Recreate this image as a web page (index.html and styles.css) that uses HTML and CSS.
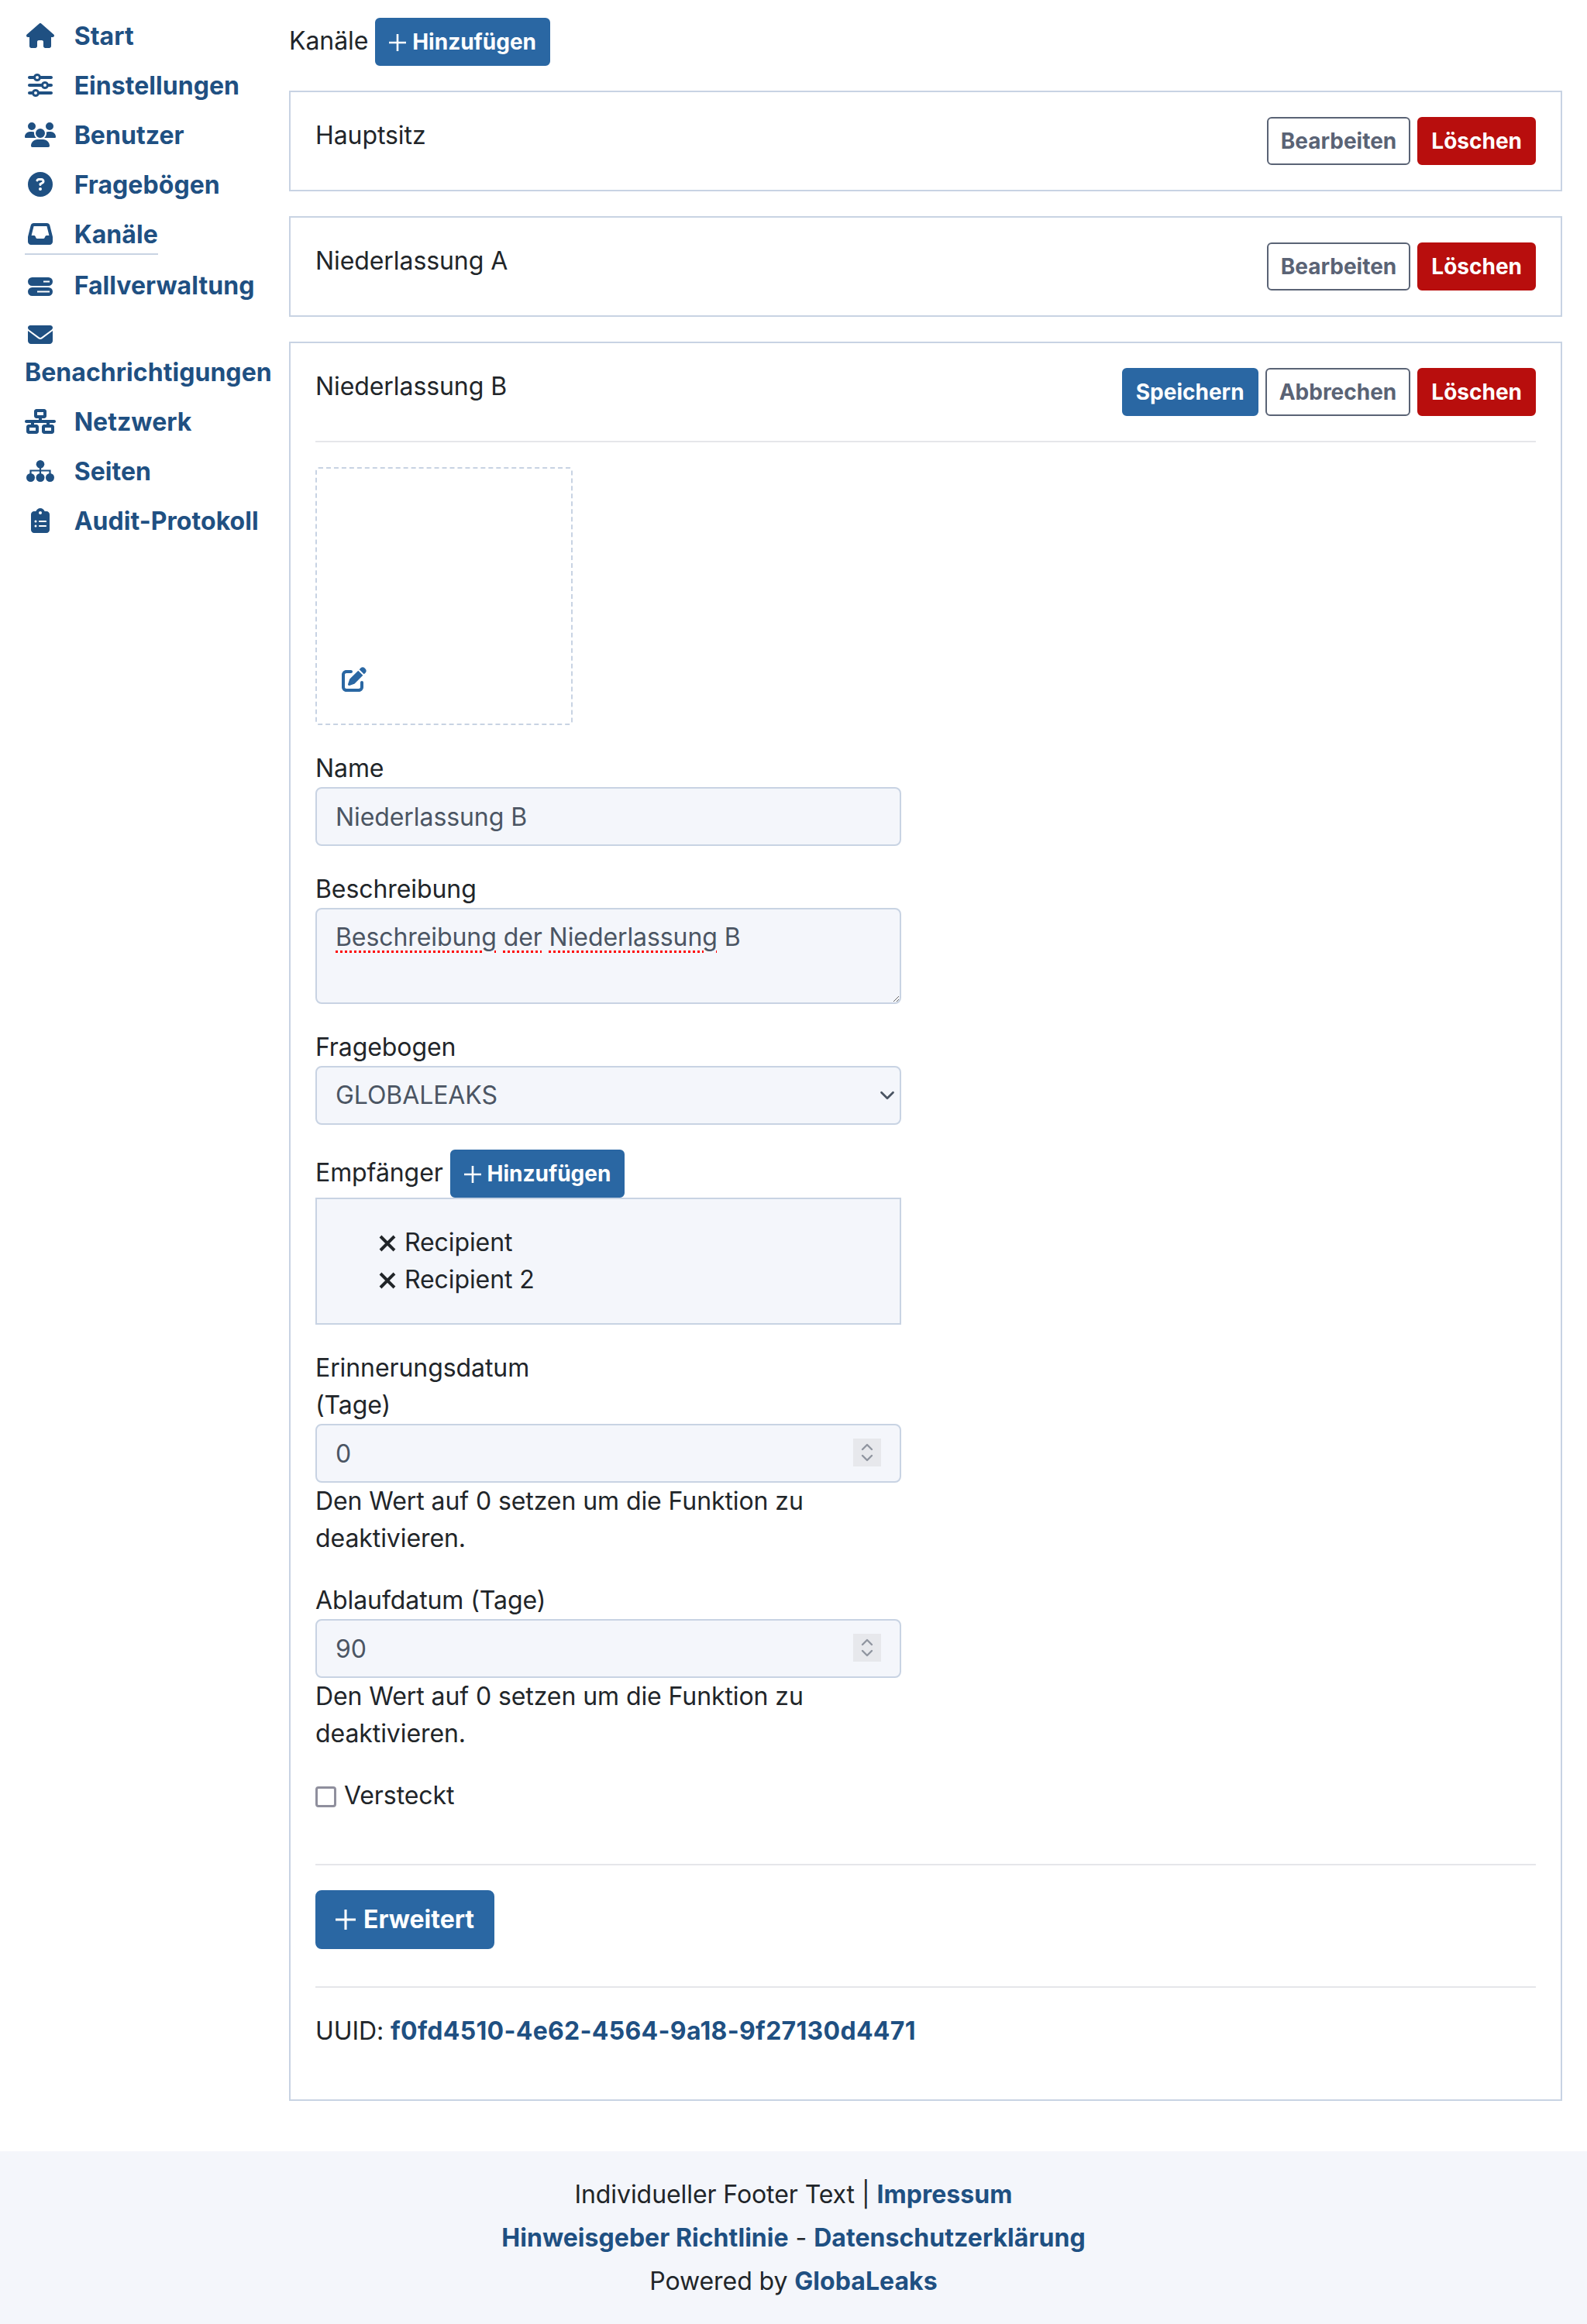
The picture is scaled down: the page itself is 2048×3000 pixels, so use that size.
FILE: index.html
```html
<!DOCTYPE html>
<html lang="de">
<head>
    <meta charset="UTF-8">
    <meta name="viewport" content="width=device-width, initial-scale=1.0">
    <title>Kanäle</title>
    <link rel="stylesheet" href="styles.css">
</head>
<body>
    <div class="layout">
        <nav class="sidebar">
            <div class="nav-item"><a class="nav-link" href="#"><span class="nav-icon"><svg class="fa" viewBox="0 0 576 512"><path d="M575.8 255.5c0 18-15 32.1-32 32.1h-32l.7 160.2c0 2.7-.2 5.4-.5 8.1V472c0 22.1-17.9 40-40 40H456c-1.1 0-2.2 0-3.3-.1c-1.4 .1-2.8 .1-4.2 .1H416 392c-22.1 0-40-17.9-40-40V448 384c0-17.7-14.3-32-32-32H256c-17.7 0-32 14.3-32 32v64 24c0 22.1-17.9 40-40 40H160 128.1c-1.5 0-3-.1-4.5-.2c-1.2 .1-2.4 .2-3.6 .2H104c-22.1 0-40-17.9-40-40V360c0-.9 0-1.9 .1-2.8V287.6H32c-18 0-32-14-32-32.1c0-9 3-17 10-24L266.4 8c7-7 15-8 22-8s15 2 21 7L564.8 231.5c8 7 12 15 11 24z"/></svg></span> Start</a></div>
            <div class="nav-item"><a class="nav-link" href="#"><span class="nav-icon"><svg class="fa" viewBox="0 0 512 512"><path d="M0 416c0 17.7 14.3 32 32 32l54.7 0c12.3 28.3 40.5 48 73.3 48s61-19.7 73.3-48L480 448c17.7 0 32-14.3 32-32s-14.3-32-32-32l-246.7 0c-12.3-28.3-40.5-48-73.3-48s-61 19.7-73.3 48L32 384c-17.7 0-32 14.3-32 32zm128 0a32 32 0 1 1 64 0 32 32 0 1 1 -64 0zM320 256a32 32 0 1 1 64 0 32 32 0 1 1 -64 0zm32-80c-32.8 0-61 19.7-73.3 48L32 224c-17.7 0-32 14.3-32 32s14.3 32 32 32l246.7 0c12.3 28.3 40.5 48 73.3 48s61-19.7 73.3-48l54.7 0c17.7 0 32-14.3 32-32s-14.3-32-32-32l-54.7 0c-12.3-28.3-40.5-48-73.3-48zM192 128a32 32 0 1 1 0-64 32 32 0 1 1 0 64zm73.3-64C253 35.7 224.8 16 192 16s-61 19.7-73.3 48L32 64C14.3 64 0 78.3 0 96s14.3 32 32 32l86.7 0c12.3 28.3 40.5 48 73.3 48s61-19.7 73.3-48L480 128c17.7 0 32-14.3 32-32s-14.3-32-32-32L265.3 64z"/></svg></span> Einstellungen</a></div>
            <div class="nav-item"><a class="nav-link" href="#"><span class="nav-icon"><svg class="fa" viewBox="0 0 640 512"><path d="M144 0a80 80 0 1 1 0 160A80 80 0 1 1 144 0zM512 0a80 80 0 1 1 0 160A80 80 0 1 1 512 0zM0 298.7C0 239.8 47.8 192 106.7 192h42.7c15.9 0 31 3.5 44.6 9.7c-1.3 7.2-1.9 14.7-1.9 22.3c0 38.2 16.8 72.5 43.3 96c-.2 0-.4 0-.7 0H21.3C9.6 320 0 310.4 0 298.7zM405.3 320c-.2 0-.4 0-.7 0c26.6-23.5 43.3-57.8 43.3-96c0-7.6-.7-15-1.9-22.3c13.6-6.3 28.7-9.7 44.6-9.7h42.7C592.2 192 640 239.8 640 298.7c0 11.8-9.6 21.3-21.3 21.3H405.3zM224 224a96 96 0 1 1 192 0 96 96 0 1 1 -192 0zM128 485.3C128 411.7 187.7 352 261.3 352H378.7C452.3 352 512 411.7 512 485.3c0 14.7-11.9 26.7-26.7 26.7H154.7c-14.7 0-26.7-11.9-26.7-26.7z"/></svg></span> Benutzer</a></div>
            <div class="nav-item"><a class="nav-link" href="#"><span class="nav-icon"><svg class="fa" viewBox="0 0 512 512"><path d="M256 512A256 256 0 1 0 256 0a256 256 0 1 0 0 512zM169.8 165.3c7.9-22.3 29.1-37.3 52.8-37.3h58.3c34.9 0 63.1 28.3 63.1 63.1c0 22.6-12.1 43.5-31.7 54.8L280 264.4c-.2 13-10.9 23.6-24 23.6c-13.3 0-24-10.7-24-24V250.5c0-8.6 4.6-16.5 12.1-20.8l44.3-25.4c4.7-2.7 7.6-7.7 7.6-13.1c0-8.4-6.8-15.1-15.1-15.1H222.6c-3.4 0-6.4 2.1-7.5 5.3l-.4 1.2c-4.4 12.5-18.2 19-30.6 14.6s-19-18.2-14.6-30.6l.4-1.2zM224 352a32 32 0 1 1 64 0 32 32 0 1 1 -64 0z"/></svg></span> Fragebögen</a></div>
            <div class="nav-item"><a class="nav-link active" href="#"><span class="nav-icon"><svg class="fa" viewBox="0 0 512 512"><path d="M121 32C91.6 32 66 52 58.9 80.5L1.9 308.4C.6 313.5 0 318.7 0 323.9V416c0 35.3 28.7 64 64 64H448c35.3 0 64-28.7 64-64V323.9c0-5.2-.6-10.4-1.9-15.5l-57-227.9C446 52 420.4 32 391 32H121zm0 64H391l48 192H387.8c-12.1 0-23.2 6.8-28.6 17.7l-14.3 28.6c-5.4 10.8-16.5 17.7-28.6 17.7H195.8c-12.1 0-23.2-6.8-28.6-17.7l-14.3-28.6c-5.4-10.8-16.5-17.7-28.6-17.7H73L121 96z"/></svg></span> Kanäle</a></div>
            <div class="nav-item"><a class="nav-link" href="#"><span class="nav-icon"><svg class="fa server" viewBox="0 0 32 24"><path fill-rule="evenodd" d="M5.500 0H26.500a5.500 5.500 0 0 1 0 11H5.500a5.500 5.500 0 0 1 0-11zM20 4.600v2h8v-2zM5.500 13H26.500a5.500 5.500 0 0 1 0 11H5.500a5.500 5.500 0 0 1 0-11zM12 17.600v2h16v-2z"/></svg></span> Fallverwaltung</a></div>
            <div class="nav-item"><a class="nav-link" href="#"><span class="nav-icon"><svg class="fa" viewBox="0 0 512 512"><path d="M48 64C21.500 64 0 85.500 0 112c0 15.100 7.100 29.300 19.200 38.400L236.800 313.600c11.400 8.500 27 8.500 38.400 0L492.800 150.400c12.100-9.100 19.200-23.300 19.200-38.400c0-26.500-21.500-48-48-48H48zM0 176V384c0 35.300 28.700 64 64 64H448c35.300 0 64-28.700 64-64V176L294.400 339.200c-22.800 17.100-54 17.100-76.800 0L0 176z"/></svg></span> Benachrichtigungen</a></div>
            <div class="nav-item"><a class="nav-link" href="#"><span class="nav-icon"><svg class="fa" viewBox="0 0 640 512"><path d="M256 64H384v64H256V64zM240 0c-26.500 0-48 21.500-48 48v96c0 26.500 21.500 48 48 48h48v32H32c-17.700 0-32 14.300-32 32s14.300 32 32 32h96v32H80c-26.500 0-48 21.500-48 48v96c0 26.500 21.500 48 48 48H240c26.500 0 48-21.500 48-48V368c0-26.500-21.500-48-48-48H192V288H448v32H400c-26.500 0-48 21.500-48 48v96c0 26.500 21.500 48 48 48H560c26.500 0 48-21.500 48-48V368c0-26.500-21.500-48-48-48H512V288h96c17.700 0 32-14.300 32-32s-14.300-32-32-32H352V192h48c26.500 0 48-21.500 48-48V48c0-26.500-21.500-48-48-48H240zM96 448V384H224v64H96zm320-64H544v64H416V384z"/></svg></span> Netzwerk</a></div>
            <div class="nav-item"><a class="nav-link" href="#"><span class="nav-icon"><svg class="fa sitemap" viewBox="0 0 36 28"><path d="M18 5V22M5.500 22V13.500H30.500V22" fill="none" stroke="currentColor" stroke-width="2.200"/><circle cx="18" cy="5.300" r="5.300"/><circle cx="5.500" cy="22.500" r="5.500"/><circle cx="18" cy="22.500" r="5.500"/><circle cx="30.500" cy="22.500" r="5.500"/></svg></span> Seiten</a></div>
            <div class="nav-item"><a class="nav-link" href="#"><span class="nav-icon"><svg class="fa" viewBox="0 0 384 512"><path d="M192 0c-41.800 0-77.400 26.700-90.500 64H64C28.700 64 0 92.700 0 128V448c0 35.300 28.700 64 64 64H320c35.300 0 64-28.700 64-64V128c0-35.300-28.700-64-64-64H282.500C269.400 26.700 233.800 0 192 0zm0 64a32 32 0 1 1 0 64 32 32 0 1 1 0-64zM72 272a24 24 0 1 1 48 0 24 24 0 1 1 -48 0zm104-16H304c8.800 0 16 7.200 16 16s-7.200 16-16 16H176c-8.800 0-16-7.200-16-16s7.200-16 16-16zM72 368a24 24 0 1 1 48 0 24 24 0 1 1 -48 0zm88 0c0-8.800 7.200-16 16-16H304c8.800 0 16 7.200 16 16s-7.200 16-16 16H176c-8.800 0-16-7.200-16-16z"/></svg></span> Audit-Protokoll</a></div>
        </nav>

        <main class="main">
            <div class="page-title">Kanäle <button class="btn btn-sm btn-primary"><svg class="plus" viewBox="0 0 22 22"><path d="M11 0V22M0 11H22"/></svg>Hinzufügen</button></div>

            <div class="card">
                <div class="card-head">
                    <div class="card-title">Hauptsitz</div>
                    <div class="card-actions">
                        <button class="btn btn-sm btn-outline">Bearbeiten</button>
                        <button class="btn btn-sm btn-danger">Löschen</button>
                    </div>
                </div>
            </div>

            <div class="card">
                <div class="card-head">
                    <div class="card-title">Niederlassung A</div>
                    <div class="card-actions">
                        <button class="btn btn-sm btn-outline">Bearbeiten</button>
                        <button class="btn btn-sm btn-danger">Löschen</button>
                    </div>
                </div>
            </div>

            <div class="card">
                <div class="card-head">
                    <div class="card-title">Niederlassung B</div>
                    <div class="card-actions">
                        <button class="btn btn-sm btn-primary">Speichern</button>
                        <button class="btn btn-sm btn-outline">Abbrechen</button>
                        <button class="btn btn-sm btn-danger">Löschen</button>
                    </div>
                </div>
                <hr>
                <div class="image-box">
                    <svg class="edit-icon" viewBox="0 0 512 512"><path d="M471.600 21.700c-21.900-21.900-57.300-21.900-79.200 0L362.300 51.700l97.900 97.900 30.100-30.100c21.900-21.900 21.900-57.300 0-79.200L471.600 21.700zm-299.200 220c-6.100 6.100-10.800 13.600-13.500 21.900l-29.600 88.800c-2.900 8.600-.6 18.100 5.800 24.600s15.900 8.700 24.600 5.800l88.800-29.600c8.200-2.700 15.700-7.400 21.900-13.500L437.700 172.300 339.700 74.300 172.400 241.700zM96 64C43 64 0 107 0 160V416c0 53 43 96 96 96H352c53 0 96-43 96-96V320c0-17.700-14.300-32-32-32s-32 14.300-32 32v96c0 17.700-14.300 32-32 32H96c-17.700 0-32-14.300-32-32V160c0-17.700 14.300-32 32-32h96c17.700 0 32-14.300 32-32s-14.300-32-32-32H96z"/></svg>
                </div>

                <div class="form-group">
                    <label>Name</label>
                    <input class="form-control" type="text" value="Niederlassung B">
                </div>
                <div class="form-group">
                    <label>Beschreibung</label>
                    <div class="form-control textarea" role="textbox" contenteditable="true"><span class="misspelled">Beschreibung</span> <span class="misspelled">der</span> <span class="misspelled">Niederlassung</span> B</div>
                </div>
                <div class="form-group">
                    <label>Fragebogen</label>
                    <select class="form-control form-select"><option>GLOBALEAKS</option></select>
                </div>
                <div class="form-group">
                    <div class="label-row">Empfänger <button class="btn btn-sm btn-primary"><svg class="plus" viewBox="0 0 22 22"><path d="M11 0V22M0 11H22"/></svg>Hinzufügen</button></div>
                    <div class="recipients">
                        <ul>
                            <li><svg class="remove" viewBox="0 0 22 22"><path d="M2 2L20 20M20 2L2 20"/></svg> Recipient</li>
                            <li><svg class="remove" viewBox="0 0 22 22"><path d="M2 2L20 20M20 2L2 20"/></svg> Recipient 2</li>
                        </ul>
                    </div>
                </div>
                <div class="form-group">
                    <label>Erinnerungsdatum<br>(Tage)</label>
                    <input class="form-control" type="number" value="0">
                    <div class="help">Den Wert auf 0 setzen um die Funktion zu deaktivieren.</div>
                </div>
                <div class="form-group">
                    <label>Ablaufdatum (Tage)</label>
                    <input class="form-control" type="number" value="90">
                    <div class="help">Den Wert auf 0 setzen um die Funktion zu deaktivieren.</div>
                </div>
                <div class="form-group form-group-last">
                    <label class="check-label"><input class="check" type="checkbox"> Versteckt</label>
                </div>
                <hr>
                <div class="advanced">
                    <button class="btn btn-primary"><svg class="plus plus-lg" viewBox="0 0 22 22"><path d="M11 0V22M0 11H22"/></svg>Erweitert</button>
                </div>
                <hr>
                <p class="uuid">UUID: <a href="#">f0fd4510-4e62-4564-9a18-9f27130d4471</a></p>
            </div>
        </main>
    </div>

    <footer class="footer">
        <p>Individueller Footer Text | <a href="#">Impressum</a></p>
        <p><a href="#">Hinweisgeber Richtlinie</a> - <a href="#">Datenschutzerklärung</a></p>
        <p>Powered by <a href="#">GlobaLeaks</a></p>
    </footer>
</body>
</html>
```
FILE: styles.css
```css
body {
    margin: 0;
    font-family: Inter, "Noto Sans", sans-serif;
    font-size: 32px;
    line-height: 48px;
    letter-spacing: -0.08px;
    color: #212529;
    background-color: #ffffff;
}
a {
    color: #1f5082;
    font-weight: 700;
    letter-spacing: 0.05px;
    text-decoration: none;
}
hr {
    margin: 32px 0;
    border: none;
    border-top: 2px solid #e5e6ea;
}
.layout {
    display: flex;
}

/* Sidebar */
.sidebar {
    width: 325px;
    flex-shrink: 0;
    padding: 15px 0 0 32px;
}
.nav-item {
    padding: 8px 0;
}
.nav-link {
    display: inline-block;
}
.nav-link.active {
    border-bottom: 2px solid #c8d3e3;
}
.nav-icon {
    display: inline-block;
    width: 40px;
    margin-right: 16px;
    text-align: center;
}
.fa {
    height: 32px;
    vertical-align: -4px;
    fill: currentColor;
}
.fa.sitemap {
    height: 28px;
    vertical-align: -2px;
}
.fa.server {
    height: 24px;
    vertical-align: -2px;
}

/* Main column */
.main {
    flex: 1;
    padding: 23px 32px 0 16px;
}
.btn {
    display: inline-block;
    padding: 12px 24px;
    font-family: inherit;
    font-size: 32px;
    line-height: 48px;
    font-weight: 700;
    letter-spacing: 0;
    border: 2px solid transparent;
    border-radius: 8px;
    background: none;
}
.btn-sm {
    padding: 8px 16px;
    font-size: 28px;
    line-height: 42px;
    border-radius: 6px;
}
.btn-primary {
    color: #ffffff;
    background-color: #2a67a3;
    border-color: #2a67a3;
}
.btn-danger {
    color: #ffffff;
    background-color: #b80e0d;
    border-color: #b80e0d;
}
.btn-outline {
    color: #5a6375;
    background-color: #ffffff;
    border-color: #5a6375;
}
.plus {
    width: 22px;
    height: 22px;
    margin-right: 8px;
    vertical-align: -2px;
    fill: none;
    stroke: currentColor;
    stroke-width: 2.6;
}
.plus-lg {
    width: 26px;
    height: 26px;
    margin-right: 10px;
}
.card {
    margin-top: 32px;
    padding: 32px;
    border: 2px solid #c8d3e3;
}
.card-head {
    display: flex;
    justify-content: space-between;
}
.card-actions {
    display: flex;
    gap: 9px;
}
.image-box {
    display: flex;
    align-items: flex-end;
    box-sizing: border-box;
    width: 332px;
    height: 333px;
    padding: 0 0 41px 32px;
    border: 2px dashed #c8d3e3;
    border-radius: 4px;
}
.edit-icon {
    width: 32px;
    height: 32px;
    fill: #2a67a3;
}

/* Form */
.form-group {
    width: 756px;
    margin-top: 32px;
}
.form-group-last {
    margin-bottom: 64px;
}
.form-group label {
    display: block;
}
.form-control {
    display: block;
    box-sizing: border-box;
    width: 100%;
    height: 76px;
    padding: 12px 24px;
    font-family: inherit;
    font-size: 32px;
    line-height: 48px;
    letter-spacing: -0.08px;
    color: #4b5563;
    background-color: #f4f6fb;
    border: 2px solid #c8d3e3;
    border-radius: 8px;
    outline: none;
}
.textarea {
    height: 124px;
    overflow: auto;
    resize: vertical;
}
.misspelled {
    text-decoration: underline dotted #ff0000 3px;
    text-underline-offset: 6px;
}
.form-select {
    appearance: none;
    background-image: url("data:image/svg+xml,%3Csvg xmlns='http://www.w3.org/2000/svg' viewBox='0 0 16 16'%3E%3Cpath d='M2 5l6 6 6-6' fill='none' stroke='%234b5563' stroke-width='2.200' stroke-linecap='round' stroke-linejoin='round'/%3E%3C/svg%3E");
    background-repeat: no-repeat;
    background-position: right 6px center;
    background-size: 20px 20px;
}
input[type="number"]::-webkit-inner-spin-button {
    -webkit-appearance: none;
    width: 36px;
    height: 36px;
    opacity: 1;
    background: #e7e8ec url("data:image/svg+xml,%3Csvg xmlns='http://www.w3.org/2000/svg' viewBox='0 0 36 36'%3E%3Cpath d='M12 14l6-6 6 6M12 22l6 6 6-6' fill='none' stroke='%239095a0' stroke-width='2.400' stroke-linecap='round' stroke-linejoin='round'/%3E%3C/svg%3E") center no-repeat;
}
.recipients {
    background-color: #f4f6fb;
    border: 2px solid #c8d3e3;
}
.recipients ul {
    margin: 32px 0;
    padding-left: 80px;
    list-style: none;
}
.remove {
    width: 22px;
    height: 22px;
    margin-right: 2px;
    vertical-align: -1px;
    fill: none;
    stroke: #212529;
    stroke-width: 4;
}
.check-label {
    display: block;
}
.check {
    appearance: none;
    box-sizing: border-box;
    width: 27px;
    height: 27px;
    margin: 0 1px 0 0;
    vertical-align: -4px;
    border: 3px solid #8f8f9d;
    border-radius: 4px;
    background-color: #ffffff;
}
.advanced {
    margin-bottom: 48px;
}
.uuid {
    margin: 0 0 32px 0;
}
.uuid a {
    letter-spacing: 0.3px;
}

/* Footer */
.footer {
    margin-top: 65px;
    padding: 32px 0 31px 0;
    text-align: center;
    background-color: #f4f6fb;
}
.footer p {
    margin: 0 0 8px 0;
}
.footer p:last-child {
    margin-bottom: 0;
}
```
